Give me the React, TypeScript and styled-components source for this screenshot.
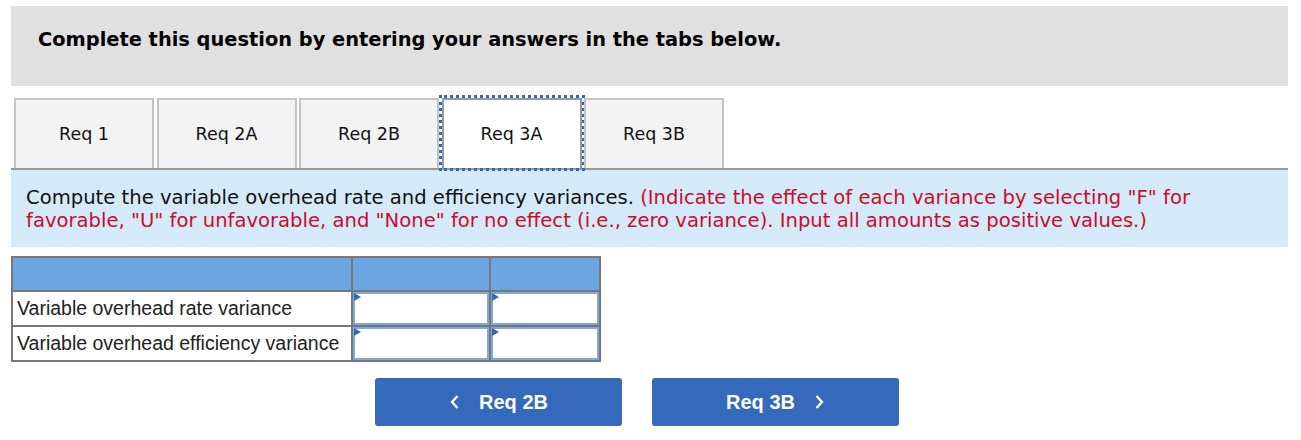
import React from "react";
import styled, { createGlobalStyle } from "styled-components";

const Global = createGlobalStyle`
  html, body { margin: 0; padding: 0; background: #fff; }
  body { font-family: "DejaVu Sans", Verdana, sans-serif; color: #000; }
`;

const Page = styled.div`
  padding: 6px 13px 0 11px;
  width: 1277px;
`;

const Header = styled.div`
  background: #e0e0e0;
  height: 80px;
  box-sizing: border-box;
  padding: 21px 0 0 27px;
  font-weight: bold;
  font-size: 19.4px;
  line-height: 26px;
`;

const TabStrip = styled.div`
  margin-top: 12px;
  display: flex;
  gap: 2.5px;
  padding-left: 3px;
  border-bottom: 2px solid #999;
  height: 70px;
`;

const Tab = styled.div<{ $active?: boolean }>`
  width: 140px;
  height: 70px;
  box-sizing: border-box;
  border: 2px solid ${(p) => (p.$active ? "#9a9a9a" : "#c4c4c4")};
  border-bottom: none;
  background: ${(p) => (p.$active ? "#fff" : "#f3f3f3")};
  display: flex;
  align-items: center;
  justify-content: center;
  font-size: 17.5px;
  padding-bottom: 0;
  color: #111;
  outline: ${(p) => (p.$active ? "3px dotted #2f68c3" : "none")};
  outline-offset: 0px;
`;

const Instructions = styled.div`
  background: #d5eaf8;
  padding: 16px 15px 15px 15px;
  font-size: 19.6px;
  line-height: 23px;
  color: #111;
`;

const Red = styled.span`
  color: #cc0a2a;
`;

const Table = styled.table`
  margin-top: 9px;
  border-collapse: collapse;
  font-family: "Liberation Sans", Arial, sans-serif;
  font-size: 19.5px;
`;

const HeadCell = styled.td<{ $w: number }>`
  background: #6da5e3;
  border: 2px solid #777;
  height: 32px;
  width: ${(p) => p.$w}px;
  padding: 0;
`;

const LabelCell = styled.td`
  border: 2px solid #777;
  height: 33px;
  padding: 0 0 0 4px;
  color: #222;
  white-space: nowrap;
`;

const InputCell = styled.td`
  border: 2px solid #777;
  padding: 0;
  height: 33px;
`;

const InputBox = styled.div`
  position: relative;
  height: 33px;
  box-sizing: border-box;
  border: 2px solid #7ea7df;
  background: #fff;
  &::before {
    content: "";
    position: absolute;
    left: -1px;
    top: -1px;
    border-left: 7px solid #3467c0;
    border-top: 4px solid transparent;
    border-bottom: 4px solid transparent;
  }
`;

const NavRow = styled.div`
  display: flex;
  gap: 30px;
  padding-left: 364px;
  margin-top: 16px;
`;

const NavButton = styled.button`
  width: 247px;
  height: 48px;
  background: #3469bc;
  border: none;
  border-radius: 3px;
  color: #fff;
  font-family: "Liberation Sans", Arial, sans-serif;
  font-weight: bold;
  font-size: 20px;
  display: flex;
  align-items: center;
  justify-content: center;
  gap: 18px;
  padding: 0;
`;

const Chevron = styled.svg`
  width: 12px;
  height: 16px;
`;

const Left = () => (
  <Chevron viewBox="0 0 12 16">
    <path d="M8.5 2 L3 8 L8.5 14" stroke="#fff" strokeWidth="2.4" fill="none" />
  </Chevron>
);
const Right = () => (
  <Chevron viewBox="0 0 12 16">
    <path d="M3.5 2 L9 8 L3.5 14" stroke="#fff" strokeWidth="2.4" fill="none" />
  </Chevron>
);

export default function App() {
  const tabs = ["Req 1", "Req 2A", "Req 2B", "Req 3A", "Req 3B"];
  const rows = ["Variable overhead rate variance", "Variable overhead efficiency variance"];
  return (
    <>
      <Global />
      <Page>
        <Header>Complete this question by entering your answers in the tabs below.</Header>
        <TabStrip>
          {tabs.map((t) => (
            <Tab key={t} $active={t === "Req 3A"}>
              {t}
            </Tab>
          ))}
        </TabStrip>
        <Instructions>
          Compute the variable overhead rate and efficiency variances.{" "}
          <Red>
            (Indicate the effect of each variance by selecting "F" for favorable, "U" for unfavorable, and
            "None" for no effect (i.e., zero variance). Input all amounts as positive values.)
          </Red>
        </Instructions>
        <Table>
          <tbody>
            <tr>
              <HeadCell $w={338} />
              <HeadCell $w={136} />
              <HeadCell $w={108} />
            </tr>
            {rows.map((r) => (
              <tr key={r}>
                <LabelCell>{r}</LabelCell>
                <InputCell>
                  <InputBox />
                </InputCell>
                <InputCell>
                  <InputBox />
                </InputCell>
              </tr>
            ))}
          </tbody>
        </Table>
        <NavRow>
          <NavButton>
            <Left />
            Req 2B
          </NavButton>
          <NavButton>
            Req 3B
            <Right />
          </NavButton>
        </NavRow>
      </Page>
    </>
  );
}
